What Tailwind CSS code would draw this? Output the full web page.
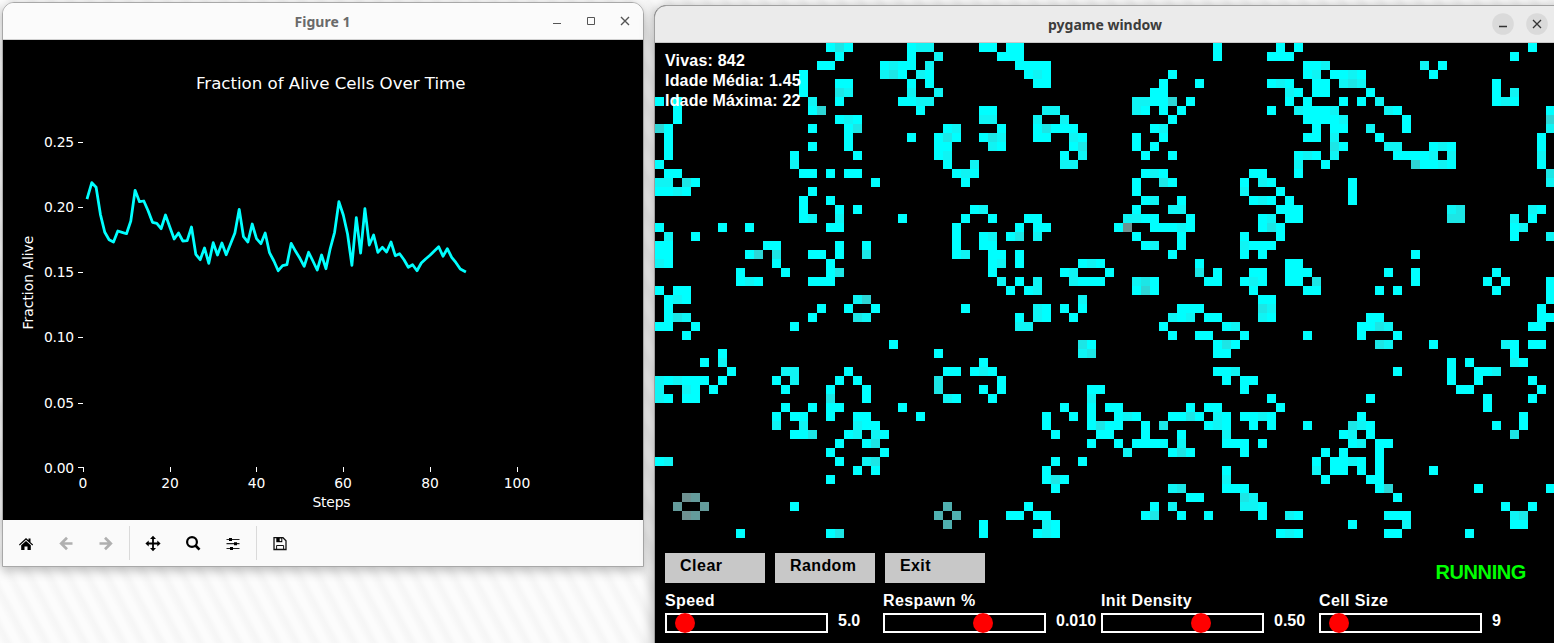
<!DOCTYPE html>
<html lang="en">
<head>
<meta charset="utf-8">
<title>Game of Life</title>
<script src="https://cdn.jsdelivr.net/npm/@tailwindcss/browser@4"></script>
</head>
<body class="relative h-[643px] w-[1554px] overflow-hidden bg-[#fcfcfc] bg-[repeating-linear-gradient(62deg,#fcfcfc_0px,#f7f7f7_5px,#f6f6f6_8px,#fcfcfc_13px,#fcfcfc_17px)]">

<!-- Matplotlib window -->
<section class="absolute left-[2px] top-[2px] flex h-[565px] w-[642px] flex-col overflow-hidden rounded-t-xl border border-[#a8a8a8] bg-[#fafafa] shadow-[0_3px_12px_rgba(0,0,0,0.28)]">
  <header class="relative flex h-[37px] shrink-0 items-center justify-center border-b border-[#d0d0d0] bg-[#fbfbfb]">
    <h1 class="pr-px pt-0.5 font-['Noto_Sans',sans-serif] text-[14px] font-bold leading-5 text-[#6a6a6a]">Figure 1</h1>
    <svg class="absolute right-0 top-0" width="100" height="36" viewBox="543 3 100 36" fill="none" stroke="#555" stroke-width="1.2">
      <path d="M553 23.5h8"/><path d="M587.5 17.5h7v7h-7z" stroke-width="1"/><path d="M621 17l8 8M629 17l-8 8" stroke-width="1.4"/>
    </svg>
  </header>
  <svg class="block shrink-0 bg-black font-['DejaVu_Sans',sans-serif]" width="640" height="480" viewBox="3 40 640 480" fill="#fff" font-size="13.89">
    <text x="196" y="88.500" font-size="16.67" textLength="269.500">Fraction of Alive Cells Over Time</text>
    <g text-anchor="end">
      <text x="74" y="147" textLength="30">0.25</text><text x="74" y="212" textLength="30">0.20</text><text x="74" y="277" textLength="30">0.15</text>
      <text x="74" y="342" textLength="30">0.10</text><text x="74" y="408" textLength="30">0.05</text><text x="74" y="473" textLength="30">0.00</text>
    </g>
    <g text-anchor="middle">
      <text x="83" y="488">0</text><text x="170" y="488">20</text><text x="256.5" y="488">40</text>
      <text x="343" y="488">60</text><text x="430" y="488">80</text><text x="517" y="488">100</text>
      <text x="331.5" y="507" textLength="38">Steps</text>
      <text transform="translate(33 282.5) rotate(-90)">Fraction Alive</text>
    </g>
    <path stroke="#fff" d="M78 142.5h5M78 207.5h5M78 272.5h5M78 337.5h5M78 403.5h5M78 467.5h5M83.500 467v5M170.500 467v5M256.500 467v5M343.500 467v5M430.500 467v5M517.500 467v5"/>
    <polyline id="series" fill="none" stroke="#0ff" stroke-width="2.78" stroke-linejoin="round" stroke-linecap="square"/>
  </svg>
  <svg class="block shrink-0" width="640" height="46" viewBox="3 520 640 46">
    <path d="M129.500 526v34M256.500 526v34" stroke="#dadada"/>
    <g fill="#000">
      <path d="M19 544.500L26 538l2.500 2.300V538.500h2v3.800l2.600 2.300-.7.800L26 539.700l-6.300 5.700z"/>
      <path d="M21.200 545.300L26 541l4.800 4.300V550h-3.300v-3.500h-3V550h-3.300z"/>
    </g>
    <g fill="none" stroke="#b0b0b0" stroke-width="2.700">
      <path d="M72.500 543.500H61.500M67 537.700l-5.800 5.800 5.800 5.800"/>
      <path d="M99.500 543.500h11M105 537.700l5.800 5.800-5.800 5.800"/>
    </g>
    <path d="M153 537v13M147 543.500h12" stroke="#000" stroke-width="1.800"/>
    <path d="M153 535.700l3 3.300h-6zM153 551.300l3-3.300h-6zM145.400 543.500l3.300-3v6zM160.600 543.500l-3.300-3v6z"/>
    <circle cx="192" cy="542" r="4.900" fill="none" stroke="#000" stroke-width="2.200"/>
    <path d="M195.500 545.500l4 4.200" stroke="#000" stroke-width="2.600"/>
    <path d="M226.500 539.500h13M226.500 543.700h13M226.500 548.500h13" stroke="#222" stroke-width="1.200"/>
    <path d="M229 538h3v3h-3zM234 542.200h3v3h-3zM230 547h3v3h-3z"/>
    <path d="M274 537.700h9l3 3v8.800h-12z" fill="none" stroke="#111" stroke-width="1.300"/>
    <path d="M276.300 538h6v4.200h-6z"/><path d="M279.700 538.500h1.600v2.600h-1.600z" fill="#fff"/>
    <path d="M276.600 549.500v-4h7v4" fill="none" stroke="#111"/>
  </svg>
</section>

<!-- Pygame window -->
<section class="absolute left-[654px] top-[5px] flex h-[650px] w-[912px] flex-col overflow-hidden rounded-t-xl border border-[#a0a0a0] bg-black shadow-[0_3px_14px_rgba(0,0,0,0.36)]">
  <header class="relative h-[37px] w-[899px] shrink-0 border-b border-[#c8c8c8] bg-[#ebebeb]">
    <h1 class="pl-px pt-[9px] text-center font-['Noto_Sans',sans-serif] text-[14px] font-bold leading-5 text-[#3c3c3c]">pygame window</h1>
    <svg class="absolute right-0 top-0" width="70" height="36" viewBox="1484 6 70 36">
      <g fill="#dadada"><circle cx="1503" cy="24" r="10.800"/><circle cx="1537" cy="24" r="10.800"/></g>
      <path d="M1499 26.500h8M1533 20l8 8M1541 20l-8 8" stroke="#333" stroke-width="1.300"/>
    </svg>
  </header>
  <main class="relative h-[600px] w-[900px] font-['Liberation_Sans',Arial,sans-serif] text-[16px] font-bold leading-5 tracking-[0.4px] text-white">
    <svg id="board" class="block" width="900" height="495" viewBox="0 0 100 55" shape-rendering="crispEdges"></svg>
    <div class="absolute left-[10px] top-[8px] whitespace-nowrap tracking-[0.2px]">
      <p>Vivas: 842</p><p>Idade Média: 1.45</p><p>Idade Máxima: 22</p>
    </div>
    <div class="flex h-[53px] items-start justify-between pl-[10px] pr-[29px] pt-[15px] text-black">
      <div class="flex gap-[10px]">
        <button class="h-[30px] w-[100px] bg-[#c8c8c8] pb-[5px] pl-[15px] text-left tracking-[0.5px]">Clear</button>
        <button class="h-[30px] w-[100px] bg-[#c8c8c8] pb-[5px] pl-[15px] text-left">Random</button>
        <button class="h-[30px] w-[100px] bg-[#c8c8c8] pb-[5px] pl-[15px] text-left">Exit</button>
      </div>
      <p class="pt-[9px] text-[20px] tracking-[-0.4px] text-[#00ff00]">RUNNING</p>
    </div>
    <div class="grid grid-cols-[218px_218px_218px_218px] pl-[10px]">
      <div><p class="h-[22px]">Speed</p>
        <div class="flex gap-[10px] whitespace-nowrap"><div class="relative h-5 w-[163px] shrink-0 border-2 border-white"><i class="absolute -top-[2px] left-[8px] size-5 rounded-full bg-[#f00]"></i></div><span class="-mt-[2px] tracking-normal">5.0</span></div></div>
      <div><p class="h-[22px]">Respawn %</p>
        <div class="flex gap-[10px] whitespace-nowrap"><div class="relative h-5 w-[163px] shrink-0 border-2 border-white"><i class="absolute -top-[2px] left-[88px] size-5 rounded-full bg-[#f00]"></i></div><span class="-mt-[2px] tracking-normal">0.010</span></div></div>
      <div><p class="h-[22px]">Init Density</p>
        <div class="flex gap-[10px] whitespace-nowrap"><div class="relative h-5 w-[163px] shrink-0 border-2 border-white"><i class="absolute -top-[2px] left-[88px] size-5 rounded-full bg-[#f00]"></i></div><span class="-mt-[2px] tracking-normal">0.50</span></div></div>
      <div><p class="h-[22px]">Cell Size</p>
        <div class="flex gap-[10px] whitespace-nowrap"><div class="relative h-5 w-[163px] shrink-0 border-2 border-white"><i class="absolute -top-[2px] left-[8px] size-5 rounded-full bg-[#f00]"></i></div><span class="-mt-[2px] tracking-normal">9</span></div></div>
    </div>
  </main>
</section>

<script>
// Fraction-alive samples, one per step, in thirds of a pixel below y = 170
const samples = [83,38,52,133,187,209,216,183,187,191,153,61,95,93,122,157,160,176,135,171,207,189,213,212,171,253,269,234,280,218,255,219,254,222,189,118,200,216,162,206,221,189,248,273,302,287,284,220,244,265,289,247,273,300,255,296,235,187,95,135,193,286,143,249,116,225,195,247,232,246,216,257,251,269,292,284,302,279,267,256,243,230,259,236,262,278,297,304];
document.getElementById('series').setAttribute('points', samples.map((v, i) => (83.1 + 4.336 * (i + 1)).toFixed(1) + ',' + (170 + v / 3).toFixed(1)).join(' '));

// Live cells: rows separated by "/", runs written as column:ages
const shades = ['', '#00ffff', '#0ff4f4', '#1ce6e6', '#2dd6d6', '#50b0b0', '#649b9b', '#6e9191'];
const blocks = [
[0, 0, '19:131/20:1/18:11/16:1/16:1 20:11/16:1 20:32/0:1 2:1 17:2 20:1/2:1 17:14/2:1 20:121/0:41 17:1 21:13/1:1 21:1/1:1 17:1 21:1/1:1 15:1 22:1/0:1 15:2/1:11 16:11 19:1 21:11/0:22 3:31 24:1/0:1121 17:1/16:1 19:1/16:1 20:1 22:1/16:12 20:2/0:1 7:1 10:1 19:11/1:2 4:1/0:11 12:11 20:1 23:1/0:11 10:14 13:3 17:11 20:1 23:3/0:21 13:1 19:1/9:1 14:1 19:13/9:121 17:111/0:1 2:11'],
[25, 0, '3:122 11:11 14:11/3:1 6:2 13:111/0:1211 5:2 15:1111/0:231 4:21 16:121/3:1 5:1 17:11/3:2 6:2/2:1122/4:1 11:11 18:22/11:22 17:2 20:2/7:12 13:1 17:13111/3:1 6:131 11:132 17:11 21:21/6:11 12:21 21:13/6:12 20:1 22:2/7:1 10:2 20:22/8:121/9:1///10:12/2:1 9:1 12:1 16:11/8:1 15:1 17:11/8:1 11:12 14:13 17:2/8:1 11:11/8:12 12:11 15:1/12:12 15:1 22:121/12:1 20:12/13:2 15:1 17:2 21:2111/14:1 16:12'],
[50, 0, '12:1 19:1 21:1/12:1 18:111/22:112/7:1 22:12/6:1 10:1 18:121 23:11/5:11 20:21 23:11/3:22114 9:1 20:1 22:1/3:21 6:1 8:1 18:1 21:2111/7:1 22:111/5:12 23:1/3:1 6:1 22:11/3:1 5:1/4:1 7:1 21:121/21:2 24:1/4:121 16:11 21:1/3:1 6:31 15:1 17:21/3:1 15:2 19:1/4:12 8:1 16:121 20:1/3:1 7:22 19:111/2:2211 9:1 17:12 20:11/1:17 5:11121 17:131/3:1 8:1 15:1 19:1/4:12 8:1 15:2111/7:1 15:1 17:1/10:1 20:11/0:1 10:3 12:1 16:11 20:111/3:231 11:11 15:121 20:11 23:3/3:141 16:1 22:11'],
[75, 0, '22:1/20:1/10:2 12:1/0:1121 11:1/1:232 18:1/4:1 18:1 20:2/1:1 3:1 5:2 18:121/0:2 6:21 24:1/0:12 8:1 24:4/0:11 4:2 8:1 24:2/0:2 5:1 23:1/0:31 6:22 11:121 23:1/0:2 7:11112 13:2 23:2/9:41121 23:1/24:3/2:1 24:2/2:1/2:1/13:23 22:21/13:33 20:2 22:1/20:12/20:1 24:2//9:1//6:1 9:1 18:1/9:1 17:1 19:1 24:1/5:1 7:1 18:1 24:1'],
[0, 28, '1:121 22:24/1:1 18:1 21:1 24:1/1:132 17:1 22:32/0:11 4:1 15:1/3:1//7:1/5:1 7:2/8:1 14:22 21:1/0:212111 7:1 13:1 15:2 20:1 22:1/0:2 3:21 6:1 14:1 19:1 23:1/0:21 3:11 19:3 23:1/14:1 17:1 19:11/13:1 15:11 19:1 22:11/13:2 16:2 22:211/15:113 21:12 24:2/20:1 23:13/19:1/0:12 20:1 23:23/22:1 24:1/19:1//3:76/2:6 5:6 15:1/3:76//9:1 19:13'],
[25, 28, '22:2/9:1 17:21 20:1 22:1/15:1 17:21 21:1/15:22//1:1 22:31/6:1 22:23/11:1/7:11 10:121/6:3 13:1/6:3 11:1 13:1 23:11/7:21 12:1 23:2/2:1 20:1 23:1/4:1 18:1 21:1 23:1/18:1 23:13/0:1 19:1 24:1/23:1/0:1/19:1 22:1/18:1/18:131/19:1//7:5 16:1/6:5 8:5 14:11 17:11/7:5 11:1 18:21/11:1 17:121'],
[50, 28, '17:11/8:111 17:32/7:212 11:11 17:21/6:1 13:12/7:1 10:11 15:1 22:1/12:131/12:11//12:112/13:1 15:11/15:1/18:1/0:11 9:1 11:11 19:1/1:121 7:1131 12:21 15:1121/0:11 4:1 6:3 11:121 16:1 18:1 22:1/0:1 4:1 8:1 13:2/1:1 3:1111 8:2 13:111 17:1/2:2 7:131 15:1 24:1/23:1/13:1 23:2/13:2 24:1/7:23 13:111/9:11 15:32/5:1 7:2 15:221/4:13 8:1 11:1 17:1 20:21//19:121'],
[75, 28, '24:1/23:1/4:11 23:11/3:1132 22:11/3:1 7:1/5:32 11:1 19:21 22:11/20:1/13:1 15:1 20:21/7:1 13:1 16:112/13:1 16:1 22:1/14:11 23:1/4:1 17:1 22:1/17:1/3:1 21:1/2:321 18:1 21:1/1:12 4:1 20:3/2:12 5:11/1:1 5:1/0:1121 5:1/0:11 3:1 5:1 11:1/4:11/5:14 16:1 24:1/7:1/19:1 22:1/6:111 20:23/2:1 8:2 20:11/6:11 15:1']
];
let cells = '';
for (const [x0, y0, data] of blocks) {
  data.split('/').forEach((row, r) => {
    if (!row) return;
    for (const run of row.split(' ')) {
      const [c, ages] = run.split(':');
      [...ages].forEach((a, i) => { cells += `<rect x="${x0 + +c + i}" y="${y0 + r}" width="1" height="1" fill="${shades[a]}"/>`; });
    }
  });
}
document.getElementById('board').innerHTML = cells;
</script>
</body>
</html>
